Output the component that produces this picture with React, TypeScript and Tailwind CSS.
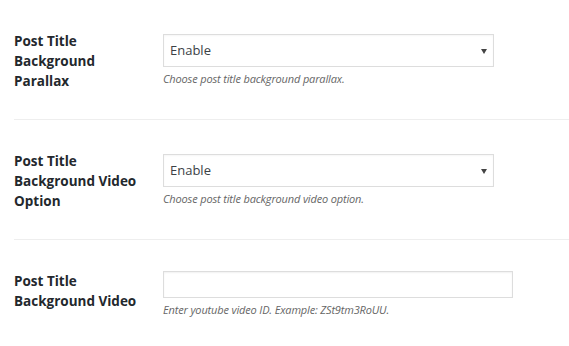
import React from "react";

const Arrow = () => (
  <svg width="6" height="5" viewBox="0 0 6 5" className="absolute right-[6px] top-[14px]">
    <path d="M0 0 H6 L3 5 Z" fill="#444" />
  </svg>
);

function Row({
  label,
  children,
  desc,
}: {
  label: React.ReactNode;
  children: React.ReactNode;
  desc: string;
}) {
  return (
    <div className="flex h-[120px] border-b border-[#eeeeee] pt-[31px]">
      <div className="w-[149px] shrink-0 pr-[19px] text-[13.5px] font-bold leading-[20px] text-[#23282d]">
        {label}
      </div>
      <div className="flex flex-col">
        {children}
        <div className="mt-[5px] text-[11px] italic leading-[14px] tracking-[-0.15px] text-[#666666]">{desc}</div>
      </div>
    </div>
  );
}

function Select() {
  return (
    <div className="relative mt-[3px] flex h-[33px] w-[331px] items-center border border-[#dddddd] bg-white pl-[6px] pt-[1px] text-[13px] text-[#3c4146] shadow-[inset_0_1px_2px_rgba(0,0,0,0.04)]">
      Enable
      <Arrow />
    </div>
  );
}

export default function App() {
  return (
    <div
      className="h-[346px] w-[569px] overflow-hidden bg-white pl-[14px]"
      style={{ fontFamily: '"Open Sans", "Noto Sans", sans-serif' }}
    >
      <Row label={<>Post Title Background Parallax</>} desc="Choose post title background parallax.">
        <Select />
      </Row>
      <Row label={<>Post Title Background Video Option</>} desc="Choose post title background video option.">
        <Select />
      </Row>
      <Row label={<>Post Title Background Video</>} desc="Enter youtube video ID. Example: ZSt9tm3RoUU.">
        <div className="h-[27px] w-[350px] border border-[#dddddd] bg-white shadow-[inset_0_1px_2px_rgba(0,0,0,0.06)]" />
      </Row>
    </div>
  );
}
